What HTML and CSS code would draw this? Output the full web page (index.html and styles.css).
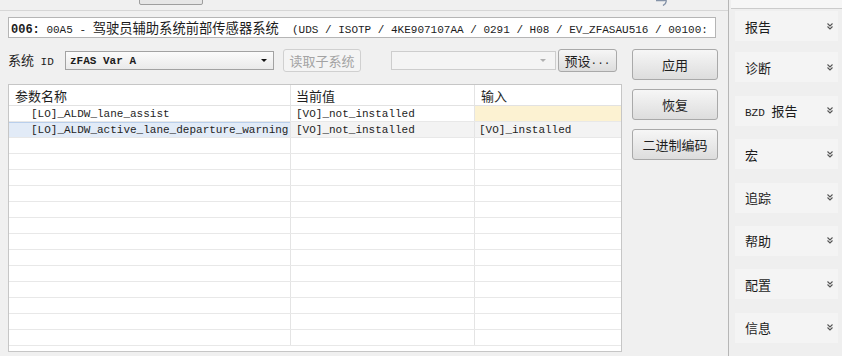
FILE: index.html
```html
<!DOCTYPE html>
<html>
<head>
    <meta charset="utf-8">
    <title>编码 - 00A5</title>
    <link rel="stylesheet" href="styles.css">
</head>
<body>
<div class="app">
    <div class="main">
        <div class="topstrip">
            <div class="tab-stub"></div>
            <svg class="swirl" width="14" height="6" viewBox="0 0 14 6"><path d="M1 0.5 Q9 1 11 0 Q12 3 8 5.5" fill="none" stroke="#8593a8" stroke-width="1.4"/></svg>
        </div>
        <div class="content">
            <div class="ecu-line"><b class="m">006:</b><span class="m"> 00A5 - </span><span class="zh">驾驶员辅助系统前部传感器系统</span><span class="m">  (UDS / ISOTP / 4KE907107AA / 0291 / H08 / EV_ZFASAU516 / 00100:</span></div>
            <div class="work">
                <div class="left">
                    <div class="toolbar">
                        <span class="label">系统<span class="m"> ID</span></span>
                        <div class="combo">
                            <span class="m val">zFAS Var A</span>
                            <span class="arrow"></span>
                        </div>
                        <div class="btn small disabled">读取子系统</div>
                        <div class="combo empty">
                            <span class="arrow grey"></span>
                        </div>
                        <div class="btn small preset">预设<span class="m">...</span></div>
                    </div>
                    <div class="grid">
                        <div class="row head">
                            <div class="cell">参数名称</div>
                            <div class="cell">当前值</div>
                            <div class="cell">输入</div>
                        </div>
                        <div class="row">
                            <div class="cell m name">[LO]_ALDW_lane_assist</div>
                            <div class="cell m">[VO]_not_installed</div>
                            <div class="cell m edit"></div>
                        </div>
                        <div class="row selected">
                            <div class="cell m name">[LO]_ALDW_active_lane_departure_warning</div>
                            <div class="cell m">[VO]_not_installed</div>
                            <div class="cell m">[VO]_installed</div>
                        </div>
                        <div class="row"><div class="cell"></div><div class="cell"></div><div class="cell"></div></div>
                        <div class="row"><div class="cell"></div><div class="cell"></div><div class="cell"></div></div>
                        <div class="row"><div class="cell"></div><div class="cell"></div><div class="cell"></div></div>
                        <div class="row"><div class="cell"></div><div class="cell"></div><div class="cell"></div></div>
                        <div class="row"><div class="cell"></div><div class="cell"></div><div class="cell"></div></div>
                        <div class="row"><div class="cell"></div><div class="cell"></div><div class="cell"></div></div>
                        <div class="row"><div class="cell"></div><div class="cell"></div><div class="cell"></div></div>
                        <div class="row"><div class="cell"></div><div class="cell"></div><div class="cell"></div></div>
                        <div class="row"><div class="cell"></div><div class="cell"></div><div class="cell"></div></div>
                        <div class="row"><div class="cell"></div><div class="cell"></div><div class="cell"></div></div>
                        <div class="row"><div class="cell"></div><div class="cell"></div><div class="cell"></div></div>
                        <div class="row"><div class="cell"></div><div class="cell"></div><div class="cell"></div></div>
                        <div class="row"><div class="cell"></div><div class="cell"></div><div class="cell"></div></div>
                    </div>
                </div>
                <div class="actions">
                    <div class="btn big">应用</div>
                    <div class="btn big">恢复</div>
                    <div class="btn big">二进制编码</div>
                </div>
            </div>
        </div>
    </div>
    <div class="side">
        <div class="side-top"></div>
        <div class="side-item"><span>报告</span><svg class="chev" width="6" height="7" viewBox="0 0 6 7"><path d="M0.5 0.5 L3 3 L5.5 0.5 M0.5 3.5 L3 6 L5.5 3.5" fill="none" stroke="#555" stroke-width="1.1"/></svg></div>
        <div class="side-item"><span>诊断</span><svg class="chev" width="6" height="7" viewBox="0 0 6 7"><path d="M0.5 0.5 L3 3 L5.5 0.5 M0.5 3.5 L3 6 L5.5 3.5" fill="none" stroke="#555" stroke-width="1.1"/></svg></div>
        <div class="side-item"><span><span class="m">BZD </span>报告</span><svg class="chev" width="6" height="7" viewBox="0 0 6 7"><path d="M0.5 0.5 L3 3 L5.5 0.5 M0.5 3.5 L3 6 L5.5 3.5" fill="none" stroke="#555" stroke-width="1.1"/></svg></div>
        <div class="side-item"><span>宏</span><svg class="chev" width="6" height="7" viewBox="0 0 6 7"><path d="M0.5 0.5 L3 3 L5.5 0.5 M0.5 3.5 L3 6 L5.5 3.5" fill="none" stroke="#555" stroke-width="1.1"/></svg></div>
        <div class="side-item"><span>追踪</span><svg class="chev" width="6" height="7" viewBox="0 0 6 7"><path d="M0.5 0.5 L3 3 L5.5 0.5 M0.5 3.5 L3 6 L5.5 3.5" fill="none" stroke="#555" stroke-width="1.1"/></svg></div>
        <div class="side-item"><span>帮助</span><svg class="chev" width="6" height="7" viewBox="0 0 6 7"><path d="M0.5 0.5 L3 3 L5.5 0.5 M0.5 3.5 L3 6 L5.5 3.5" fill="none" stroke="#555" stroke-width="1.1"/></svg></div>
        <div class="side-item"><span>配置</span><svg class="chev" width="6" height="7" viewBox="0 0 6 7"><path d="M0.5 0.5 L3 3 L5.5 0.5 M0.5 3.5 L3 6 L5.5 3.5" fill="none" stroke="#555" stroke-width="1.1"/></svg></div>
        <div class="side-item"><span>信息</span><svg class="chev" width="6" height="7" viewBox="0 0 6 7"><path d="M0.5 0.5 L3 3 L5.5 0.5 M0.5 3.5 L3 6 L5.5 3.5" fill="none" stroke="#555" stroke-width="1.1"/></svg></div>
    </div>
</div>
</body>
</html>
```

FILE: styles.css
```css
* {
    box-sizing: border-box;
    margin: 0;
    padding: 0;
}
body {
    font-family: "Noto Sans CJK SC", "Noto Sans", sans-serif;
    font-size: 13px;
    color: #1c1c1c;
    background: #f0f0f0;
    width: 842px;
    height: 356px;
    overflow: hidden;
}
.m {
    font-family: "Liberation Mono", "Noto Sans CJK SC", monospace;
    font-size: 11px;
}
.app {
    display: flex;
    height: 356px;
}
.main {
    width: 728px;
    flex: none;
}
.topstrip {
    height: 11px;
    border-bottom: 1px solid #d6d6d6;
    display: flex;
    align-items: flex-start;
    padding-left: 139px;
    overflow: hidden;
}
.tab-stub {
    width: 64px;
    height: 15px;
    margin-top: -10px;
    border: 1px solid #9e9e9e;
    border-radius: 2px;
    background: #e6e6e6;
}
.swirl {
    margin-left: 452px;
}
.content {
    padding: 6px 0 0 8px;
}
.ecu-line {
    width: 708px;
    height: 21px;
    border: 1px solid #b5b5b5;
    background: #fff;
    padding-left: 2px;
    line-height: 19px;
    white-space: pre;
    overflow: hidden;
}
.ecu-line b {
    font-size: 12px;
}
.ecu-line .zh {
    font-size: 13.3px;
}
.work {
    display: flex;
    gap: 10px;
    margin-top: 11px;
}
.left {
    width: 614px;
}
.toolbar {
    display: flex;
    align-items: center;
    height: 23px;
}
.label {
    width: 57px;
    line-height: 19px;
    white-space: nowrap;
}
.combo {
    width: 209px;
    height: 19px;
    flex: none;
    border: 1px solid #a2a2a2;
    background: linear-gradient(#fbfbfb, #eaeaea);
    display: flex;
    align-items: center;
    justify-content: space-between;
    padding: 0 6px 0 4px;
}
.combo .val {
    font-weight: bold;
}
.combo.empty {
    width: 165px;
    margin-left: 30px;
    border-color: #cdcdcd;
    background: #f4f4f4;
    justify-content: flex-end;
    padding-right: 9px;
}
.arrow {
    width: 0;
    height: 0;
    border-left: 3px solid transparent;
    border-right: 3px solid transparent;
    border-top: 3px solid #111;
}
.arrow.grey {
    border-top-color: #b0b0b0;
}
.btn {
    border: 1px solid #a9a9a9;
    border-radius: 3px;
    background: linear-gradient(#f6f6f6, #dddddd);
    display: flex;
    align-items: center;
    justify-content: center;
    color: #1e1e1e;
    white-space: nowrap;
    flex: none;
}
.btn.small {
    height: 23px;
    padding: 0;
    margin-left: 9px;
}
.btn.preset {
    margin-left: 2px;
    width: 59px;
}
.btn.disabled {
    width: 78px;
    border-color: #d0d0d0;
    background: #f4f4f4;
    color: #a3a3a3;
}
.grid {
    margin-top: 12px;
    height: 268px;
    border: 1px solid #c6c6c6;
    background: #fff;
    overflow: hidden;
}
.row {
    display: grid;
    grid-template-columns: 282px 184px 1fr;
    height: 16px;
    border-bottom: 1px solid #e8e8e8;
}
.row.head {
    height: 21px;
    border-bottom-color: #e2e2e2;
}
.cell {
    border-right: 1px solid #e4e4e4;
    padding-left: 5px;
    line-height: 17px;
    white-space: nowrap;
    overflow: hidden;
    color: #1e1e1e;
}
.cell:last-child {
    border-right: none;
    padding-left: 4px;
}
.head .cell {
    line-height: 22px;
    padding-left: 6px;
}
.head .cell:nth-child(2) {
    padding-left: 5px;
}
.cell.name {
    padding-left: 22px;
}
.cell.edit {
    background: #fcf2d2;
}
.selected .cell {
    background: #f3f3f3;
}
.selected .cell.name {
    background: #e2ebf7;
    box-shadow: inset 0 1px 0 #b9cfec;
}
.actions {
    width: 86px;
    display: flex;
    flex-direction: column;
    gap: 9px;
}
.btn.big {
    height: 31px;
}
.side {
    flex: 1;
    border-left: 1px solid #b6b6b6;
    background: #efefef;
}
.side-top {
    height: 9px;
    margin-left: 2px;
    border-bottom: 1px solid #cbcbcb;
    background: #f6f6f6;
}
.side-item {
    height: 30px;
    margin: 2px 4px 11.4px 6px;
    padding: 0 5px 0 10px;
    display: flex;
    align-items: center;
    justify-content: space-between;
    background: #f4f4f4;
    white-space: nowrap;
}
.side-item + .side-item {
    margin-top: 0;
    margin-bottom: 13.4px;
}
```
